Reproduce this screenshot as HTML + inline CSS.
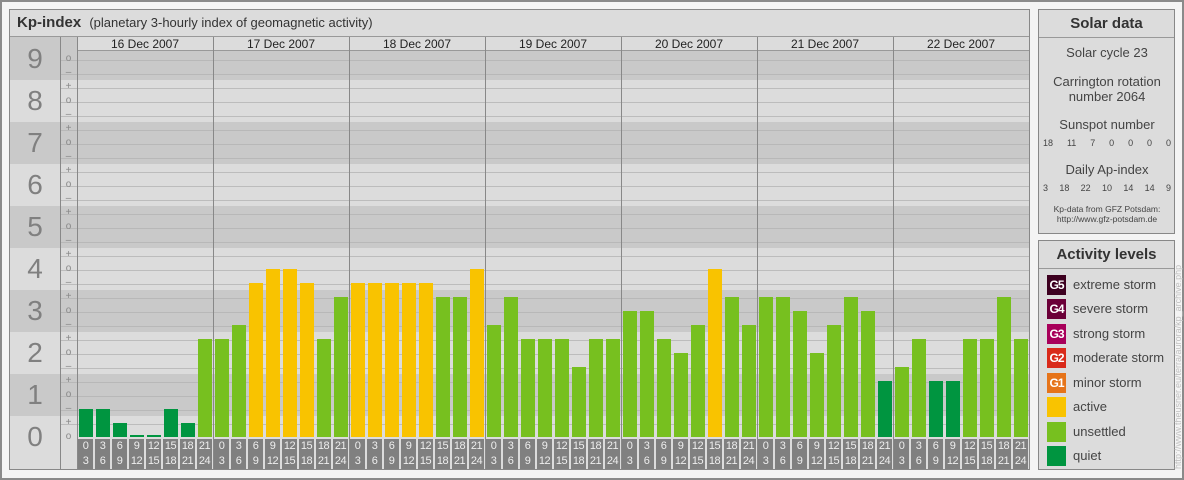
<!DOCTYPE html><html><head><meta charset="utf-8"><style>
*{margin:0;padding:0;box-sizing:border-box}
body{width:1184px;height:480px;background:#f4f4f4;position:relative;overflow:hidden;font-family:"Liberation Sans",sans-serif;color:#222}
.frame{position:absolute;left:0;top:0;width:1184px;height:480px;border:2px solid #8a8a8a}
.panel{position:absolute;background:#dcdcdc;border:1px solid #888}
.abs{position:absolute}
.band{position:absolute;left:10px;width:1019px;background:#c9c9c9}
.num{position:absolute;left:10px;width:50px;text-align:center;font-size:28px;color:#808080;line-height:30px}
.tk{position:absolute;left:60px;width:17px;text-align:center;font-size:10px;color:#888;line-height:10px}
.day{position:absolute;top:51px;width:136px;height:386px}
.day div{position:absolute;bottom:0;width:14px}
.q{background:#009540}.u{background:#77c01f}.a{background:#f9c300}
.lab{position:absolute;top:439px;width:136px;height:30px}
.lab div{position:absolute;top:0;width:15px;height:30px;background:#808080;color:#eee;font-size:11px;line-height:15px;text-align:center;letter-spacing:-0.5px}
.dt{position:absolute;top:37px;width:136px;text-align:center;font-size:12px;line-height:15px;color:#222}
.vl{position:absolute;top:37px;width:1px;height:432px;background:#888}
.st{text-align:center;font-size:13px;color:#444;position:absolute;left:0;width:136px}
.row{position:absolute;left:4px;width:128px;display:flex;justify-content:space-between;font-size:9px;color:#444}
.lv{position:absolute;left:8px;height:20px;font-size:13px;color:#444;line-height:20px}
.lv span{display:inline-block;width:19px;height:20px;vertical-align:top;margin-right:7px;color:#fff;font-size:12px;text-align:center;font-weight:bold;letter-spacing:-1px}
</style></head><body>
<div class="frame"></div>
<div class="panel" style="left:9px;top:9px;width:1021px;height:461px"></div>
<div class="abs" style="left:10px;top:10px;width:1019px;height:27px;border-bottom:1px solid #999;background:#dcdcdc"></div>
<div class="abs" style="left:17px;top:14px;font-size:15px;font-weight:bold;color:#333">Kp-index <span style="font-weight:normal;font-size:13px;margin-left:4px">(planetary 3-hourly index of geomagnetic activity)</span></div>
<!-- bands -->
<div class="band" style="top:37px;height:43px"></div>
<div class="band" style="top:122px;height:42px"></div>
<div class="band" style="top:206px;height:42px"></div>
<div class="band" style="top:290px;height:42px"></div>
<div class="band" style="top:374px;height:42px"></div>
<div class="abs" style="left:77px;top:37px;width:952px;height:14px;background:#dcdcdc;border-bottom:1px solid #999"></div>
<div class="abs" style="left:77px;top:51px;width:952px;height:387px;background:repeating-linear-gradient(to top,transparent 0,transparent 13px,#b4b4b4 13px,#b4b4b4 14px);opacity:.8"></div>
<div class="abs" style="left:60px;top:51px;width:17px;height:387px;background:repeating-linear-gradient(to top,transparent 0,transparent 13px,#b4b4b4 13px,#b4b4b4 14px);opacity:.8"></div>
<div class="vl" style="left:60px"></div><div class="vl" style="left:77px"></div>
<div class="vl" style="left:213px"></div><div class="vl" style="left:349px"></div><div class="vl" style="left:485px"></div><div class="vl" style="left:621px"></div><div class="vl" style="left:757px"></div><div class="vl" style="left:893px"></div>
<div class="num" style="top:44px">9</div><div class="num" style="top:86px">8</div><div class="num" style="top:128px">7</div><div class="num" style="top:170px">6</div><div class="num" style="top:212px">5</div><div class="num" style="top:254px">4</div><div class="num" style="top:296px">3</div><div class="num" style="top:338px">2</div><div class="num" style="top:380px">1</div><div class="num" style="top:422px">0</div>
<div class="tk" style="top:54px">o</div><div class="tk" style="top:68px">–</div>
<div class="tk" style="top:82px">+</div><div class="tk" style="top:96px">o</div><div class="tk" style="top:110px">–</div>
<div class="tk" style="top:124px">+</div><div class="tk" style="top:138px">o</div><div class="tk" style="top:152px">–</div>
<div class="tk" style="top:166px">+</div><div class="tk" style="top:180px">o</div><div class="tk" style="top:194px">–</div>
<div class="tk" style="top:208px">+</div><div class="tk" style="top:222px">o</div><div class="tk" style="top:236px">–</div>
<div class="tk" style="top:250px">+</div><div class="tk" style="top:264px">o</div><div class="tk" style="top:278px">–</div>
<div class="tk" style="top:292px">+</div><div class="tk" style="top:306px">o</div><div class="tk" style="top:320px">–</div>
<div class="tk" style="top:334px">+</div><div class="tk" style="top:348px">o</div><div class="tk" style="top:362px">–</div>
<div class="tk" style="top:376px">+</div><div class="tk" style="top:390px">o</div><div class="tk" style="top:404px">–</div>
<div class="tk" style="top:418px">+</div><div class="tk" style="top:432px">o</div>
<div class="dt" style="left:77px">16 Dec 2007</div><div class="dt" style="left:213px">17 Dec 2007</div><div class="dt" style="left:349px">18 Dec 2007</div><div class="dt" style="left:485px">19 Dec 2007</div><div class="dt" style="left:621px">20 Dec 2007</div><div class="dt" style="left:757px">21 Dec 2007</div><div class="dt" style="left:893px">22 Dec 2007</div>
<div class="day" style="left:77px"><div class="q" style="left:2px;height:28px"></div><div class="q" style="left:19px;height:28px"></div><div class="q" style="left:36px;height:14px"></div><div class="q" style="left:53px;height:2px"></div><div class="q" style="left:70px;height:2px"></div><div class="q" style="left:87px;height:28px"></div><div class="q" style="left:104px;height:14px"></div><div class="u" style="left:121px;height:98px"></div></div>
<div class="day" style="left:213px"><div class="u" style="left:2px;height:98px"></div><div class="u" style="left:19px;height:112px"></div><div class="a" style="left:36px;height:154px"></div><div class="a" style="left:53px;height:168px"></div><div class="a" style="left:70px;height:168px"></div><div class="a" style="left:87px;height:154px"></div><div class="u" style="left:104px;height:98px"></div><div class="u" style="left:121px;height:140px"></div></div>
<div class="day" style="left:349px"><div class="a" style="left:2px;height:154px"></div><div class="a" style="left:19px;height:154px"></div><div class="a" style="left:36px;height:154px"></div><div class="a" style="left:53px;height:154px"></div><div class="a" style="left:70px;height:154px"></div><div class="u" style="left:87px;height:140px"></div><div class="u" style="left:104px;height:140px"></div><div class="a" style="left:121px;height:168px"></div></div>
<div class="day" style="left:485px"><div class="u" style="left:2px;height:112px"></div><div class="u" style="left:19px;height:140px"></div><div class="u" style="left:36px;height:98px"></div><div class="u" style="left:53px;height:98px"></div><div class="u" style="left:70px;height:98px"></div><div class="u" style="left:87px;height:70px"></div><div class="u" style="left:104px;height:98px"></div><div class="u" style="left:121px;height:98px"></div></div>
<div class="day" style="left:621px"><div class="u" style="left:2px;height:126px"></div><div class="u" style="left:19px;height:126px"></div><div class="u" style="left:36px;height:98px"></div><div class="u" style="left:53px;height:84px"></div><div class="u" style="left:70px;height:112px"></div><div class="a" style="left:87px;height:168px"></div><div class="u" style="left:104px;height:140px"></div><div class="u" style="left:121px;height:112px"></div></div>
<div class="day" style="left:757px"><div class="u" style="left:2px;height:140px"></div><div class="u" style="left:19px;height:140px"></div><div class="u" style="left:36px;height:126px"></div><div class="u" style="left:53px;height:84px"></div><div class="u" style="left:70px;height:112px"></div><div class="u" style="left:87px;height:140px"></div><div class="u" style="left:104px;height:126px"></div><div class="q" style="left:121px;height:56px"></div></div>
<div class="day" style="left:893px"><div class="u" style="left:2px;height:70px"></div><div class="u" style="left:19px;height:98px"></div><div class="q" style="left:36px;height:56px"></div><div class="q" style="left:53px;height:56px"></div><div class="u" style="left:70px;height:98px"></div><div class="u" style="left:87px;height:98px"></div><div class="u" style="left:104px;height:140px"></div><div class="u" style="left:121px;height:98px"></div></div>
<div class="lab" style="left:77px"><div style="left:1px">0<br>3</div><div style="left:18px">3<br>6</div><div style="left:35px">6<br>9</div><div style="left:52px">9<br>12</div><div style="left:69px">12<br>15</div><div style="left:86px">15<br>18</div><div style="left:103px">18<br>21</div><div style="left:120px">21<br>24</div></div>
<div class="lab" style="left:213px"><div style="left:1px">0<br>3</div><div style="left:18px">3<br>6</div><div style="left:35px">6<br>9</div><div style="left:52px">9<br>12</div><div style="left:69px">12<br>15</div><div style="left:86px">15<br>18</div><div style="left:103px">18<br>21</div><div style="left:120px">21<br>24</div></div>
<div class="lab" style="left:349px"><div style="left:1px">0<br>3</div><div style="left:18px">3<br>6</div><div style="left:35px">6<br>9</div><div style="left:52px">9<br>12</div><div style="left:69px">12<br>15</div><div style="left:86px">15<br>18</div><div style="left:103px">18<br>21</div><div style="left:120px">21<br>24</div></div>
<div class="lab" style="left:485px"><div style="left:1px">0<br>3</div><div style="left:18px">3<br>6</div><div style="left:35px">6<br>9</div><div style="left:52px">9<br>12</div><div style="left:69px">12<br>15</div><div style="left:86px">15<br>18</div><div style="left:103px">18<br>21</div><div style="left:120px">21<br>24</div></div>
<div class="lab" style="left:621px"><div style="left:1px">0<br>3</div><div style="left:18px">3<br>6</div><div style="left:35px">6<br>9</div><div style="left:52px">9<br>12</div><div style="left:69px">12<br>15</div><div style="left:86px">15<br>18</div><div style="left:103px">18<br>21</div><div style="left:120px">21<br>24</div></div>
<div class="lab" style="left:757px"><div style="left:1px">0<br>3</div><div style="left:18px">3<br>6</div><div style="left:35px">6<br>9</div><div style="left:52px">9<br>12</div><div style="left:69px">12<br>15</div><div style="left:86px">15<br>18</div><div style="left:103px">18<br>21</div><div style="left:120px">21<br>24</div></div>
<div class="lab" style="left:893px"><div style="left:1px">0<br>3</div><div style="left:18px">3<br>6</div><div style="left:35px">6<br>9</div><div style="left:52px">9<br>12</div><div style="left:69px">12<br>15</div><div style="left:86px">15<br>18</div><div style="left:103px">18<br>21</div><div style="left:120px">21<br>24</div></div>

<div class="panel" style="left:1038px;top:9px;width:137px;height:225px">
<div class="abs" style="left:0;top:0;width:135px;height:28px;border-bottom:1px solid #999;text-align:center;font-size:15px;font-weight:bold;color:#333;line-height:28px">Solar data</div>
<div class="st" style="top:35px">Solar cycle 23</div>
<div class="st" style="top:64px;line-height:15px">Carrington rotation<br>number 2064</div>
<div class="st" style="top:107px">Sunspot number</div>
<div class="row" style="top:128px"><span>18</span><span>11</span><span>7</span><span>0</span><span>0</span><span>0</span><span>0</span></div>
<div class="st" style="top:152px">Daily Ap-index</div>
<div class="row" style="top:173px"><span>3</span><span>18</span><span>22</span><span>10</span><span>14</span><span>14</span><span>9</span></div>
<div class="st" style="top:194px;font-size:8.5px;line-height:10px">Kp-data from GFZ Potsdam:<br>http://www.gfz-potsdam.de</div>
</div>
<div class="panel" style="left:1038px;top:240px;width:137px;height:230px">
<div class="abs" style="left:0;top:0;width:135px;height:28px;border-bottom:1px solid #999;text-align:center;font-size:15px;font-weight:bold;color:#333;line-height:28px">Activity levels</div>
<div class="lv" style="top:34px"><span style="background:#3d0020">G5</span>extreme storm</div>
<div class="lv" style="top:58px"><span style="background:#6b0038">G4</span>severe storm</div>
<div class="lv" style="top:83px"><span style="background:#a8005a">G3</span>strong storm</div>
<div class="lv" style="top:107px"><span style="background:#d92a1a">G2</span>moderate storm</div>
<div class="lv" style="top:132px"><span style="background:#e6741a">G1</span>minor storm</div>
<div class="lv" style="top:156px"><span style="background:#f9c300"></span>active</div>
<div class="lv" style="top:181px"><span style="background:#77c01f"></span>unsettled</div>
<div class="lv" style="top:205px"><span style="background:#009540"></span>quiet</div>
</div>
<div class="abs" style="left:1172px;top:469px;width:230px;transform:rotate(-90deg);transform-origin:0 0;font-size:9px;color:#c0c0c0;white-space:nowrap;line-height:12px">http://www.theusner.eu/terra/aurora/kp_archive.php</div>
</body></html>
